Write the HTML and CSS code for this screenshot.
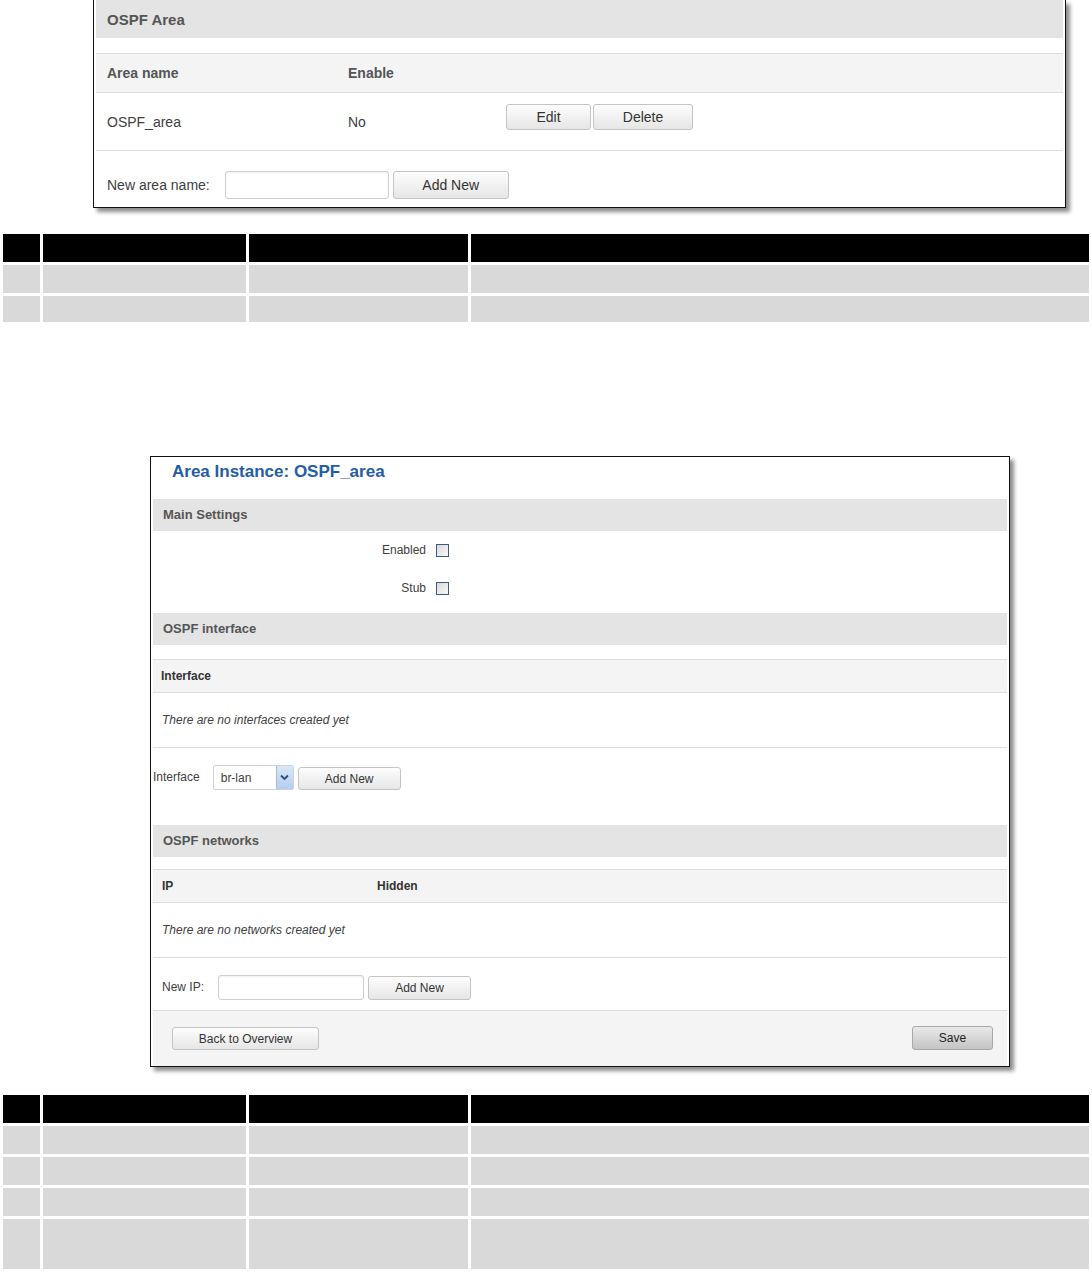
FILE: index.html
```html
<!DOCTYPE html>
<html lang="en">
<head>
    <meta charset="UTF-8">
    <title>OSPF Area</title>
    <link rel="stylesheet" href="styles.css">
</head>
<body>
    <div class="shot shot-area">
        <div class="band band-area">OSPF Area</div>
        <div class="area-cols area-head">
            <span>Area name</span>
            <span>Enable</span>
            <span></span>
        </div>
        <div class="area-cols area-row">
            <span>OSPF_area</span>
            <span>No</span>
            <div class="actions">
                <button class="btn btn-edit">Edit</button>
                <button class="btn btn-delete">Delete</button>
            </div>
        </div>
        <div class="area-add">
            <span>New area name:</span>
            <input class="field-input area-input" type="text">
            <button class="btn btn-add-area">Add New</button>
        </div>
    </div>

    <table class="spec spec-top">
        <colgroup><col class="c1"><col class="c2"><col class="c3"><col></colgroup>
        <tr><th></th><th></th><th></th><th></th></tr>
        <tr><td></td><td></td><td></td><td></td></tr>
        <tr><td></td><td></td><td></td><td></td></tr>
    </table>

    <div class="shot shot-inst">
        <h2 class="inst-title">Area Instance: OSPF_area</h2>
        <div class="band band-inst">Main Settings</div>
        <div class="opt-row">
            <span class="opt-label">Enabled</span>
            <span class="check"></span>
        </div>
        <div class="opt-row">
            <span class="opt-label">Stub</span>
            <span class="check"></span>
        </div>

        <div class="band band-inst band-gap">OSPF interface</div>
        <div class="tbl-head"><span>Interface</span></div>
        <div class="tbl-empty">There are no interfaces created yet</div>
        <div class="iface-add">
            <span class="iface-label">Interface</span>
            <div class="select">
                <span>br-lan</span>
                <span class="select-arrow">
                    <svg width="9" height="7" viewBox="0 0 9 7"><polyline points="1,1.5 4.5,5 8,1.5" fill="none" stroke="#2b4c7e" stroke-width="1.8"/></svg>
                </span>
            </div>
            <button class="btn btn-small btn-add-iface">Add New</button>
        </div>

        <div class="band band-inst">OSPF networks</div>
        <div class="tbl-head net-head"><span class="col-ip">IP</span><span>Hidden</span></div>
        <div class="tbl-empty">There are no networks created yet</div>
        <div class="net-add">
            <span class="net-label">New IP:</span>
            <input class="field-input net-input" type="text">
            <button class="btn btn-small btn-add-net">Add New</button>
        </div>
        <div class="inst-foot">
            <button class="btn btn-small btn-back">Back to Overview</button>
            <button class="btn btn-small btn-save">Save</button>
        </div>
    </div>

    <table class="spec spec-bottom">
        <colgroup><col class="c1"><col class="c2"><col class="c3"><col></colgroup>
        <tr><th></th><th></th><th></th><th></th></tr>
        <tr><td></td><td></td><td></td><td></td></tr>
        <tr><td></td><td></td><td></td><td></td></tr>
        <tr><td></td><td></td><td></td><td></td></tr>
        <tr class="tall"><td></td><td></td><td></td><td></td></tr>
    </table>
</body>
</html>
```

FILE: styles.css
```css
body {
    margin: 0;
    width: 1092px;
    font-family: "Liberation Sans", Arial, sans-serif;
    color: #404040;
    background: #fff;
}

/* screenshot frames */
.shot {
    box-sizing: border-box;
    background: #fff;
    border: 1px solid #111;
    padding: 0 2px;
    box-shadow: 4px 4px 4px rgba(0, 0, 0, 0.45);
}
.shot-area {
    margin-left: 93px;
    width: 973px;
    border-top: none;
}
.shot-inst {
    margin: 131px 0 0 150px;
    width: 860px;
}

.band {
    background: #e4e4e4;
    color: #555;
    font-weight: bold;
}
.band-area {
    height: 38px;
    line-height: 39px;
    padding-left: 11px;
    font-size: 15px;
}
.band-inst {
    height: 32px;
    line-height: 32px;
    padding-left: 10px;
    font-size: 13px;
}

/* buttons and inputs */
.btn {
    box-sizing: border-box;
    height: 26px;
    padding: 0;
    border: 1px solid #c4c4c4;
    border-radius: 3px;
    background: linear-gradient(#fdfdfd, #e6e6e6);
    font-family: "Liberation Sans", Arial, sans-serif;
    font-size: 14px;
    color: #333;
}
.btn-small {
    height: 23px;
    font-size: 12px;
}
.field-input {
    box-sizing: border-box;
    border: 1px solid #cfcfcf;
    border-radius: 3px;
    background: #fff;
    box-shadow: inset 0 1px 2px rgba(0, 0, 0, 0.06);
}

/* OSPF Area overview */
.area-cols {
    box-sizing: border-box;
    display: grid;
    grid-template-columns: 241px 158px 1fr;
    align-items: center;
    padding-left: 11px;
    font-size: 14px;
}
.area-head {
    margin-top: 15px;
    height: 40px;
    border-top: 1px solid #ddd;
    border-bottom: 1px solid #ddd;
    background: #f4f4f4;
    font-weight: bold;
    color: #555;
}
.area-row {
    height: 58px;
    border-bottom: 1px solid #ddd;
}
.actions {
    display: flex;
    gap: 2px;
    margin-top: -10px;
}
.btn-edit { width: 85px; }
.btn-delete { width: 100px; }
.area-add {
    box-sizing: border-box;
    height: 56px;
    display: flex;
    align-items: center;
    padding: 11px 0 0 11px;
    font-size: 14px;
}
.area-input {
    width: 164px;
    height: 28px;
    margin-left: 15px;
}
.btn-add-area {
    width: 116px;
    height: 28px;
    margin-left: 4px;
}

/* spec tables */
.spec {
    width: 1092px;
    table-layout: fixed;
    border-spacing: 3px;
}
.spec-top { margin-top: 23px; }
.spec-bottom { margin-top: 25px; }
.spec .c1 { width: 37px; }
.spec .c2 { width: 203px; }
.spec .c3 { width: 219px; }
.spec th,
.spec td {
    padding: 0;
    height: 28px;
}
.spec th { background: #000; }
.spec td { background: #d9d9d9; }
.spec-top tr:last-child td { height: 26px; }
.spec .tall td { height: 50px; }

/* Area instance */
.inst-title {
    margin: 0;
    height: 42px;
    box-sizing: border-box;
    padding: 5px 0 0 19px;
    line-height: 20px;
    font-size: 17px;
    color: #255ca6;
}
.opt-row {
    height: 38px;
    display: grid;
    grid-template-columns: 273px auto;
    column-gap: 10px;
    align-items: center;
    font-size: 12px;
}
.opt-row:last-of-type { margin-bottom: 6px; }
.opt-label { text-align: right; }
.check {
    box-sizing: border-box;
    width: 13px;
    height: 13px;
    border: 1px solid #3d5b82;
    background: linear-gradient(135deg, #d9d9d9, #fafafa);
}
.band-gap { margin-top: 6px; }

.tbl-head {
    box-sizing: border-box;
    margin-top: 14px;
    height: 34px;
    display: flex;
    align-items: center;
    padding-left: 8px;
    border-top: 1px solid #ddd;
    border-bottom: 1px solid #ddd;
    background: #f4f4f4;
    font-size: 12px;
    font-weight: bold;
    color: #333;
}
.net-head {
    margin-top: 12px;
    padding-left: 9px;
}
.col-ip { width: 215px; }
.tbl-empty {
    box-sizing: border-box;
    height: 55px;
    display: flex;
    align-items: center;
    padding-left: 9px;
    border-bottom: 1px solid #ddd;
    font-size: 12px;
    font-style: italic;
}

.iface-add {
    box-sizing: border-box;
    height: 77px;
    display: flex;
    align-items: flex-start;
    padding-top: 17px;
    font-size: 12px;
}
.iface-label { line-height: 25px; }
.select {
    box-sizing: border-box;
    width: 81px;
    height: 25px;
    margin-left: 13px;
    display: flex;
    align-items: center;
    justify-content: space-between;
    padding-left: 7px;
    border: 1px solid #c9d2de;
    border-radius: 2px;
    background: #fff;
}
.select-arrow {
    width: 16px;
    height: 23px;
    display: flex;
    align-items: center;
    justify-content: center;
    background: linear-gradient(#dbe7f8, #b5cdee);
    border-left: 1px solid #a9bedd;
}
.btn-add-iface {
    width: 103px;
    margin: 2px 0 0 4px;
}

.net-add {
    box-sizing: border-box;
    height: 53px;
    display: flex;
    align-items: flex-start;
    padding: 17px 0 0 9px;
    border-bottom: 1px solid #ddd;
    font-size: 12px;
}
.net-label { line-height: 25px; }
.net-input {
    width: 146px;
    height: 25px;
    margin-left: 14px;
}
.btn-add-net {
    width: 103px;
    height: 24px;
    margin: 1px 0 0 4px;
}

.inst-foot {
    box-sizing: border-box;
    height: 55px;
    display: flex;
    align-items: flex-start;
    justify-content: space-between;
    padding: 16px 14px 0 19px;
    background: #f4f4f4;
}
.btn-back { width: 147px; }
.btn-save {
    width: 81px;
    height: 24px;
    margin-top: -1px;
    border-color: #a8a8a8;
    background: linear-gradient(#e9e9e9, #c4c4c4);
    color: #222;
}
```
